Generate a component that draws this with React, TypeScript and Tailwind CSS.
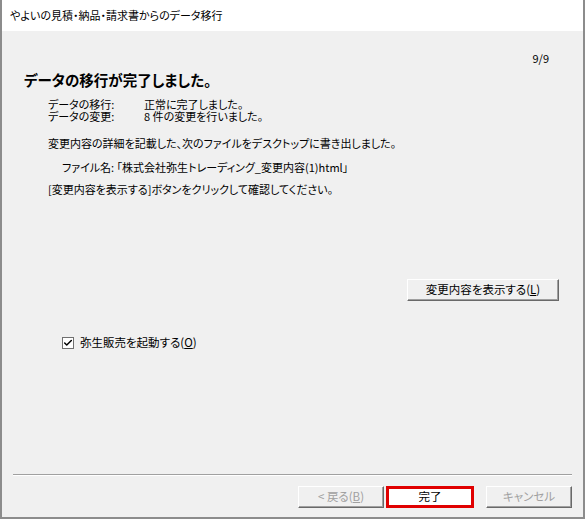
import { Check } from "lucide-react";

const font = "font-['Noto_Sans_CJK_JP','Noto_Sans',sans-serif] [font-feature-settings:'palt']";

const ClassicButton = ({ label, disabled, className = "" }: { label: React.ReactNode; disabled?: boolean; className?: string }) => (
    <button
        className={`h-[22px] bg-[#f0f0f0] border border-t-white border-l-white border-b-[#696969] border-r-[#696969] shadow-[inset_-1px_-1px_0_#a0a0a0] text-[11.5px] leading-none ${disabled ? "text-[#a0a0a0]" : "text-black"} ${className}`}
    >
        {label}
    </button>
);

const App = () => {
    return (
        <div className={`w-[585px] h-[519px] flex flex-col border-l-2 border-r-2 border-b-2 border-[#8c8c8c] bg-[#f0f0f0] text-black ${font}`}>
            <div className="h-[31px] bg-white flex items-center pl-[8px] text-[11px]">
                やよいの見積・納品・請求書からのデータ移行
            </div>
            <div className="flex-1 flex flex-col">
                <div className="pt-[21px] pr-[34px] text-right text-[11px] leading-[12px]">9/9</div>
                <h1 className="mt-[7px] pl-[22px] text-[14.5px] leading-[18px] font-bold">データの移行が完了しました。</h1>
                <div className="mt-[9px] pl-[46px] text-[11px] leading-[12px]">
                    <div className="flex">
                        <span className="w-[96px]">データの移行:</span>
                        <span>正常に完了しました。</span>
                    </div>
                    <div className="flex">
                        <span className="w-[96px]">データの変更:</span>
                        <span>8 件の変更を行いました。</span>
                    </div>
                    <div className="mt-[15px]">変更内容の詳細を記載した、次のファイルをデスクトップに書き出しました。</div>
                    <div className="mt-[12px] pl-[14px]">ファイル名: 「株式会社弥生トレーディング_変更内容(1)html」</div>
                    <div className="mt-[10px]">[変更内容を表示する]ボタンをクリックして確認してください。</div>
                </div>
                <div className="mt-[84px] flex justify-end pr-[24px]">
                    <ClassicButton
                        className="w-[152px] h-[21px]"
                        label={<>変更内容を表示する(<span className="underline">L</span>)</>}
                    />
                </div>
                <div className="mt-[33px] pl-[60px] flex items-center gap-[6px] text-[11.5px]">
                    <span className="w-[12px] h-[12px] bg-white border border-[#707070] flex items-center justify-center">
                        <Check size={10} strokeWidth={3.5} />
                    </span>
                    <span>弥生販売を起動する(<span className="underline">O</span>)</span>
                </div>
                <div className="flex-1" />
                <div className="mx-[11px] border-t border-t-[#a0a0a0] border-b border-b-white" />
                <div className="mt-[10px] mb-[9px] flex justify-end items-center pr-[11px]">
                    <ClassicButton disabled className="w-[86px]" label={<>&lt; 戻る(<span className="underline">B</span>)</>} />
                    <div className="ml-[2px] border-[3px] border-[#e00000] w-[88px] h-[22px] flex">
                        <ClassicButton className="w-full h-full bg-white border-0 shadow-none" label="完了" />
                    </div>
                    <ClassicButton disabled className="ml-[12px] w-[86px]" label="キャンセル" />
                </div>
            </div>
        </div>
    );
};

export default App;
